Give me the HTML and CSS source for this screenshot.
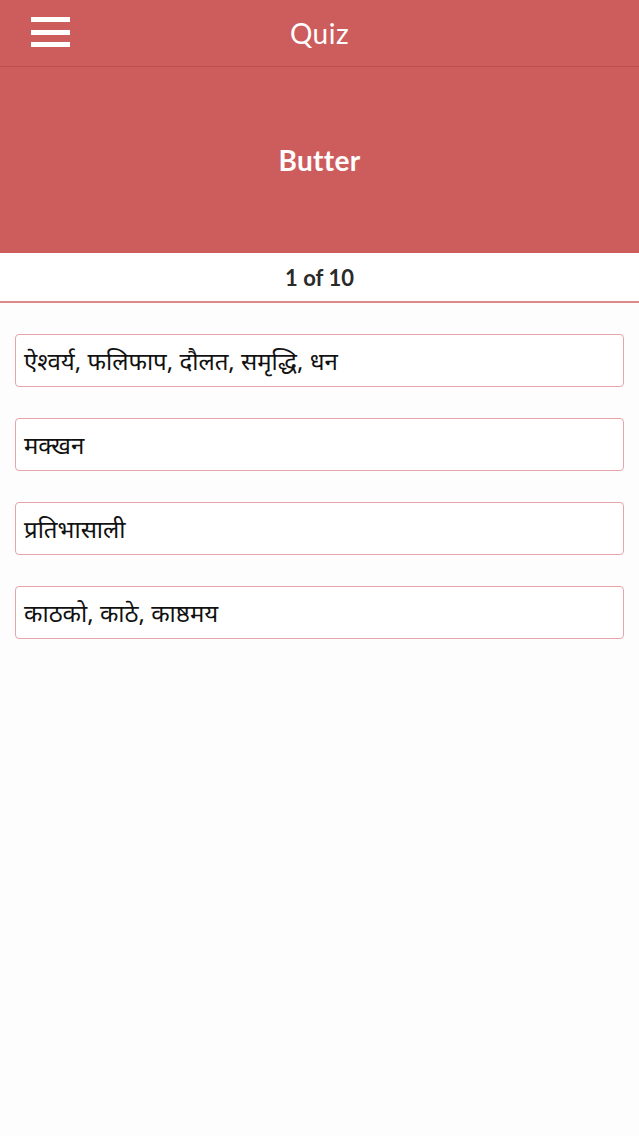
FILE: index.html
```html
<!DOCTYPE html>
<html lang="ne">
<head>
<meta charset="utf-8">
<title>Quiz</title>
<link rel="stylesheet" href="styles.css">
</head>
<body>
<header class="topbar">
  <button class="menu" aria-label="Menu">
    <svg width="40" height="31" viewBox="0 0 40 31"><rect x="0" y="0" width="39" height="5" fill="#fff"/><rect x="0" y="13" width="39" height="5" fill="#fff"/><rect x="0" y="25" width="39" height="5" fill="#fff"/></svg>
  </button>
  <h1 class="title">Quiz</h1>
</header>
<section class="word">Butter</section>
<div class="counter">1 of 10</div>
<main class="options">
  <div class="option">ऐश्वर्य, फलिफाप, दौलत, समृद्धि, धन</div>
  <div class="option">मक्खन</div>
  <div class="option">प्रतिभासाली</div>
  <div class="option">काठको, काठे, काष्ठमय</div>
</main>
</body>
</html>
```
FILE: styles.css
```css
html, body { margin: 0; padding: 0; }
body {
  background: #fdfdfd;
  font-family: "Open Sans", "Noto Sans", "Liberation Sans", sans-serif;
  width: 639px;
  min-height: 1136px;
}
.topbar {
  position: relative;
  height: 66px;
  background: #cd5c5c;
  border-bottom: 1px solid #b84e4e;
  display: flex;
  align-items: center;
  justify-content: center;
}
.menu {
  position: absolute;
  left: 31px;
  top: 17px;
  padding: 0;
  border: 0;
  background: none;
  line-height: 0;
}
.title {
  margin: 0;
  color: #fff;
  font-weight: 400;
  font-size: 28px;
  font-family: "Lato", "Liberation Sans", sans-serif;
  letter-spacing: 0.5px;
}
.word {
  height: 186px;
  background: #cd5c5c;
  color: #fff;
  display: flex;
  align-items: center;
  justify-content: center;
  font-family: "Lato", "Liberation Sans", sans-serif;
  font-weight: 700;
  font-size: 28px;
  letter-spacing: 0.3px;
}
.counter {
  height: 48px;
  background: #fff;
  border-bottom: 2px solid #e08888;
  display: flex;
  align-items: center;
  justify-content: center;
  font-family: "Lato", "Liberation Sans", sans-serif;
  font-weight: 700;
  font-size: 22px;
  color: #2a2a2a;
}
.options {
  display: flex;
  flex-direction: column;
  gap: 31px;
  padding: 31px 15px 0 15px;
}
.option {
  height: 51px;
  border: 1px solid #e8a4ab;
  border-radius: 4px;
  background: #fff;
  display: flex;
  align-items: center;
  padding: 0 8px;
  font-size: 24px;
  color: #111;
  font-family: "Noto Sans", "Noto Sans Devanagari", "Lohit Devanagari", sans-serif;
}
```
